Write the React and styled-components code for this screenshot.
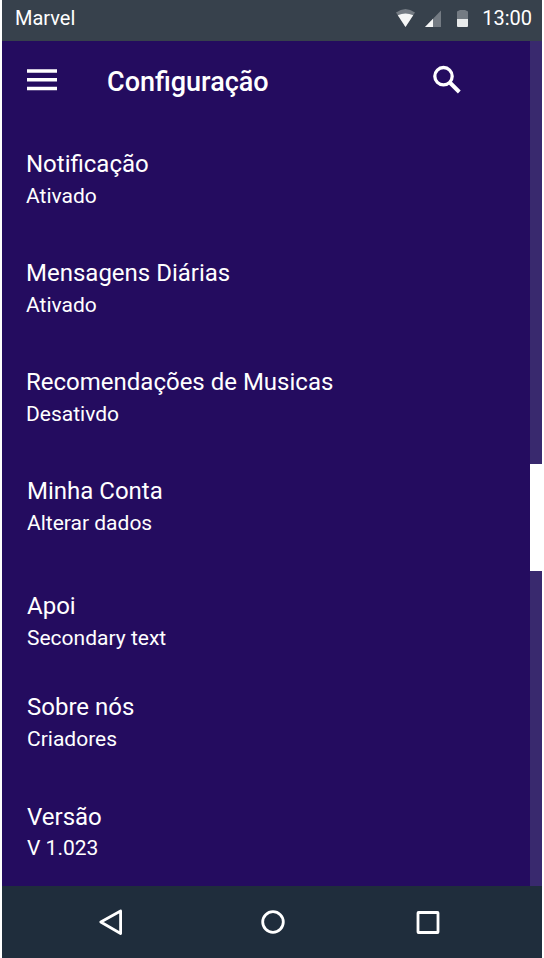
import React from "react";
import styled, { createGlobalStyle } from "styled-components";

const GlobalStyle = createGlobalStyle`
  * { box-sizing: border-box; }
  body { margin: 0; background: #fff; font-family: Roboto, "Noto Sans", sans-serif; color: #fff; }
  h1, h2, p, ul { margin: 0; padding: 0; }
  svg { display: block; }
`;

const Screen = styled.div`
  display: flex;
  flex-direction: column;
  width: 540px;
  height: 958px;
  margin-left: 2px;
  overflow: hidden;
  background: #240c5f;
`;

const StatusBar = styled.header`
  display: flex;
  align-items: center;
  justify-content: space-between;
  height: 41px;
  padding: 0 10px 5px 13px;
  background: #37414c;
  font-size: 20px;
  line-height: 24px;
`;

const StatusIcons = styled.div`
  display: flex;
  align-items: center;
`;

const Clock = styled.span`
  margin-left: 13px;
`;

const Body = styled.div`
  display: flex;
  height: 845px;
`;

const Content = styled.main`
  flex: 1;
`;

const ScrollTrack = styled.div`
  width: 12px;
  padding-top: 423px;
  background: #39296e;
`;

const ScrollThumb = styled.div`
  height: 107px;
  background: #fff;
`;

const Toolbar = styled.div`
  display: flex;
  align-items: flex-start;
  height: 109px;
  padding: 24px 68px 0 25px;
`;

const IconButton = styled.button`
  display: block;
  padding: 0;
  border: 0;
  background: none;
  color: #fff;
`;

const Title = styled.h1`
  flex: 1;
  margin-top: 1px;
  margin-left: 50px;
  font-size: 27px;
  font-weight: 500;
  line-height: 32px;
`;

const Settings = styled.ul`
  list-style: none;
`;

const Setting = styled.li`
  height: ${(p) => p.$height}px;
  padding-left: ${(p) => p.$indent}px;
`;

const Name = styled.h2`
  font-size: 24px;
  font-weight: 400;
  line-height: 28px;
`;

const Value = styled.p`
  margin-top: ${(p) => p.$gap}px;
  font-size: 21px;
  line-height: 25px;
`;

const NavBar = styled.nav`
  height: 72px;
  background: #1f2d3c;
`;

const items = [
  { name: "Notificação", value: "Ativado", height: 109, indent: 24 },
  { name: "Mensagens Diárias", value: "Ativado", height: 109, indent: 24 },
  { name: "Recomendações de Musicas", value: "Desativdo", height: 109, indent: 24 },
  { name: "Minha Conta", value: "Alterar dados", height: 115, indent: 25 },
  { name: "Apoi", value: "Secondary text", height: 101, indent: 25 },
  { name: "Sobre nós", value: "Criadores", height: 110, indent: 25 },
  { name: "Versão", value: "V 1.023", height: 80, indent: 25, gap: 5 },
];

const StatusGlyphs = () => (
  <svg width="74" height="20" viewBox="395 8 74 20">
    <path d="M396 12.500Q405.500 5.500 415 12.500L405.500 27Z" fill="#747b83" />
    <path d="M397.800 15.300Q405.500 11.500 413.200 15.300L405.500 27Z" fill="#f5f6f6" />
    <path d="M441 10.500V27H425Z" fill="#747b83" />
    <path d="M433 18.800V27H425Z" fill="#f5f6f6" />
    <path d="M457 19V12Q457 11 458 11L460 10H465L467 11Q468 11 468 12V19Z" fill="#747b83" />
    <path d="M457 19H468V26Q468 27 467 27H458Q457 27 457 26Z" fill="#e8eaeb" />
  </svg>
);

const MenuIcon = () => (
  <svg width="30" height="30" viewBox="0 0 30 30" fill="currentColor">
    <path d="M0 4.300H30V7.800H0ZM0 13H30V16.500H0ZM0 21.700H30V25.200H0Z" />
  </svg>
);

const SearchIcon = () => (
  <svg width="30" height="30" viewBox="0 0 30 30" fill="none" stroke="currentColor">
    <circle cx="11.500" cy="11.200" r="8.700" strokeWidth="3.300" />
    <path d="M17.800 17.500L27.300 27" strokeWidth="4" />
  </svg>
);

const NavIcons = () => (
  <svg width="540" height="72" viewBox="2 886 540 72" fill="none" stroke="#fff" strokeWidth="2.800" strokeLinejoin="round">
    <path d="M120.600 911L100.800 922L120.600 933.500Z" />
    <circle cx="273" cy="922" r="10.300" />
    <rect x="418" y="912.500" width="20" height="20" rx=".5" />
  </svg>
);

export default function App() {
  return (
    <>
      <GlobalStyle />
      <Screen>
        <StatusBar>
          <span>Marvel</span>
          <StatusIcons>
            <StatusGlyphs />
            <Clock>13:00</Clock>
          </StatusIcons>
        </StatusBar>
        <Body>
          <Content>
            <Toolbar>
              <IconButton aria-label="Menu"><MenuIcon /></IconButton>
              <Title>Configuração</Title>
              <IconButton aria-label="Buscar"><SearchIcon /></IconButton>
            </Toolbar>
            <Settings>
              {items.map((item) => (
                <Setting key={item.name} $height={item.height} $indent={item.indent}>
                  <Name>{item.name}</Name>
                  <Value $gap={item.gap ?? 6}>{item.value}</Value>
                </Setting>
              ))}
            </Settings>
          </Content>
          <ScrollTrack><ScrollThumb /></ScrollTrack>
        </Body>
        <NavBar><NavIcons /></NavBar>
      </Screen>
    </>
  );
}
